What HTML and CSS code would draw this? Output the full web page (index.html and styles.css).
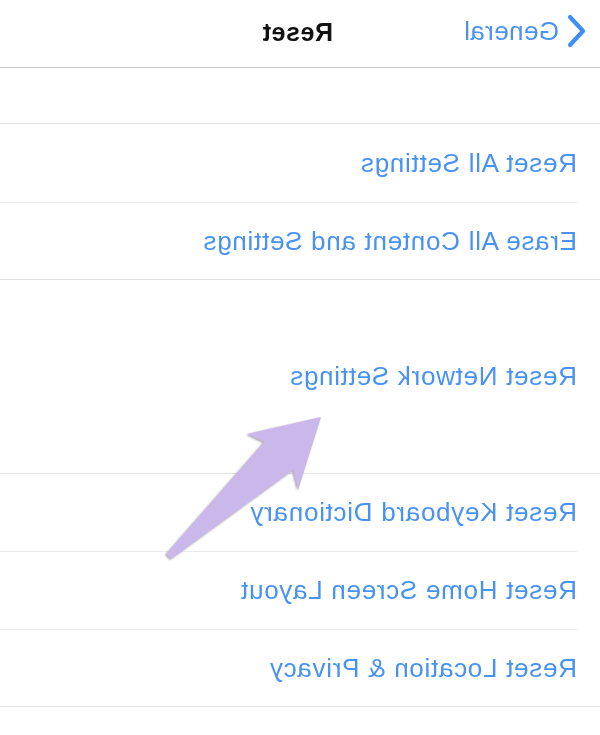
FILE: index.html
```html
<!DOCTYPE html>
<html>
<head>
<meta charset="utf-8">
<link rel="stylesheet" href="styles.css">
</head>
<body>
<div class="screen">
  <header class="nav">
    <div class="back">
      <svg class="chev" width="22" height="34" viewBox="0 0 22 34"><path d="M17 3 L4 17 L17 31" fill="none" stroke="#3d8ef5" stroke-width="4.2" stroke-linecap="round" stroke-linejoin="round"/></svg>
      <span class="back-label">General</span>
    </div>
    <div class="title">Reset</div>
  </header>
  <div class="spacer"></div>
  <section class="group">
    <div class="row first"><span>Reset All Settings</span></div>
    <div class="row"><span>Erase All Content and Settings</span></div>
  </section>
  <section class="group tall">
    <div class="row"><span>Reset Network Settings</span></div>
  </section>
  <section class="group">
    <div class="row"><span>Reset Keyboard Dictionary</span></div>
    <div class="row"><span>Reset Home Screen Layout</span></div>
    <div class="row"><span>Reset Location &amp; Privacy</span></div>
  </section>
</div>
<svg class="annot" width="600" height="735" viewBox="0 0 600 735">
  <polygon points="166,554 264,442 247,434 321,417 298,490 293,470 171,559" fill="#cbb8ea"/>
</svg>
</body>
</html>
```
FILE: styles.css
```css
html, body {
  margin: 0;
  padding: 0;
  background: #ffffff;
}
body {
  width: 600px;
  height: 735px;
  overflow: hidden;
  position: relative;
  font-family: "Liberation Sans", Arial, sans-serif;
}
.screen {
  width: 600px;
  transform: scaleX(-1);
}
.nav {
  height: 67px;
  border-bottom: 1px solid #c9c8cd;
  position: relative;
  display: flex;
  align-items: center;
  justify-content: center;
}
.back {
  position: absolute;
  left: 13px;
  top: 14px;
  display: flex;
  align-items: center;
  gap: 6px;
}
.chev {
  display: block;
}
.back-label {
  color: #4a93f3;
  font-size: 26px;
  letter-spacing: 0.4px;
  line-height: 34px;
}
.title {
  font-size: 25px;
  font-weight: bold;
  color: #111111;
  letter-spacing: 0.6px;
  margin-left: 5px;
  margin-top: -2px;
}
.spacer {
  height: 55px;
  border-bottom: 1px solid #e2e1e8;
}
.group {
  border-bottom: 1px solid #e2e1e8;
}
.row {
  margin-left: 23px;
  height: 77px;
  border-bottom: 1px solid #ebeaf0;
  display: flex;
  align-items: center;
  color: #4892f4;
  font-size: 26px;
  letter-spacing: 0.72px;
}
.row.first {
  height: 78px;
}
.row:last-child {
  border-bottom: none;
  height: 76px;
}
.tall .row {
  height: 193px;
}
.annot {
  position: absolute;
  left: 0;
  top: 0;
  pointer-events: none;
  filter: drop-shadow(-1px 1px 0.8px rgba(60, 50, 70, 0.45));
}
```
